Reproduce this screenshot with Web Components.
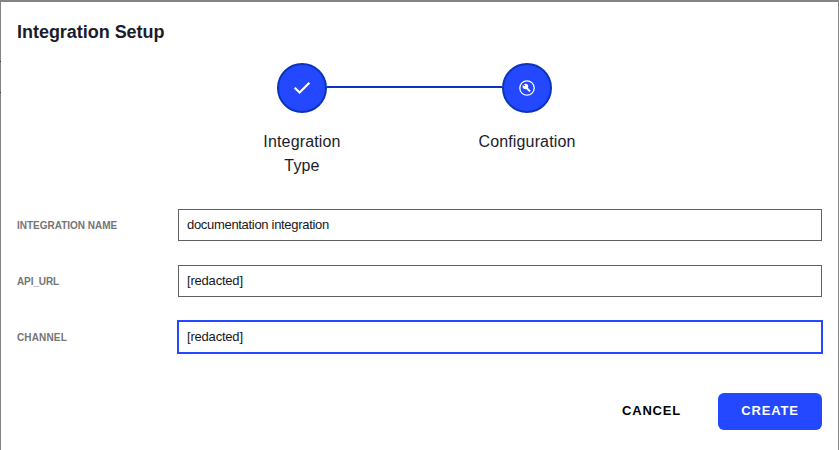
<!DOCTYPE html>
<html lang="en">
<head>
<meta charset="utf-8">
<title>Integration Setup</title>
<style>
html,body{margin:0;height:100%;overflow:hidden;background:#848484}
body{font-family:"Liberation Sans",Arial,sans-serif;color:#1b1c2b}
</style>
</head>
<body>
<setup-dialog heading="Integration Setup">
  <step-track slot="steps">
    <step-item kind="check">Integration<br>Type</step-item>
    <step-item kind="wrench">Configuration</step-item>
  </step-track>
  <form-field label="INTEGRATION NAME" style="--ls:-.01px;--vs:-.31px">documentation integration</form-field>
  <form-field label="API_URL" style="--ls:-.1px;--vs:-.2px">[redacted]</form-field>
  <form-field label="CHANNEL" active style="--ls:.15px;--vs:-.2px">[redacted]</form-field>
  <action-button slot="actions">CANCEL</action-button>
  <action-button slot="actions" primary>CREATE</action-button>
</setup-dialog>
<script>
const define = (name, html) => customElements.define(name, class extends HTMLElement {
  constructor() {
    super();
    this.attachShadow({mode: 'open'}).innerHTML = html(this);
  }
});

define('setup-dialog', el => `
<style>
:host{display:block;box-sizing:border-box;height:100vh;padding:2px 1px 0;background:linear-gradient(#333,#333) 0 61px/1px 1px no-repeat,linear-gradient(#333,#333) 0 92px/1px 1px no-repeat,#848484}
main{box-sizing:border-box;height:100%;background:#fff;padding:18px 16px 0;display:flex;flex-direction:column}
h1{margin:0;font-size:18px;line-height:24px;font-weight:700;letter-spacing:-.03px}
.steps{margin-top:19px}
.fields{margin-top:31px;display:grid;gap:24px}
footer{display:flex;justify-content:flex-end;margin-top:40px}
</style>
<main>
  <h1>${el.getAttribute('heading')}</h1>
  <div class="steps"><slot name="steps"></slot></div>
  <div class="fields"><slot></slot></div>
  <footer><slot name="actions"></slot></footer>
</main>`);

define('step-track', () => `
<style>
:host{display:grid;grid-template-columns:225px 225px;margin-left:172px;height:115px}
</style><slot></slot>`);

const icons = {
  check: '<svg width="46" height="46" viewBox="2 2 46 46"><path d="M17.7 24.7l4.9 4.9L32.4 19.8" fill="none" stroke="#fff" stroke-width="2.1"/></svg>',
  wrench: '<svg width="46" height="46" viewBox="2 2 46 46"><circle cx="25" cy="25" r="7.2" fill="none" stroke="#fff" stroke-width="1.3"/><path d="M23.6 24l4.4 4.4" stroke="#fff" stroke-width="2"/><circle cx="23.4" cy="23.5" r="2.8" fill="#fff"/><path d="M20.8 20.9l2 2" stroke="#2348ff" stroke-width="1.2"/></svg>'
};
define('step-item', el => `
<style>
:host{display:flex;flex-direction:column;align-items:center;font-size:16px;line-height:24px;text-align:center;letter-spacing:.15px}
.row{display:grid;grid-template-columns:1fr 50px 1fr;width:100%;align-items:center}
.dot{box-sizing:border-box;width:50px;height:50px;border:2px solid #0a35bb;border-radius:50%;background:#2348ff;display:grid;place-items:center}
svg{display:block}
i{height:2px;background:#0a35bb;transform:translateY(-1px)}
:host([kind=check]) i:first-child,:host([kind=wrench]) i:last-child{visibility:hidden}
.text{margin-top:17px;padding-left:1px}
</style>
<div class="row"><i></i><div class="dot">${icons[el.getAttribute('kind')]}</div><i></i></div>
<div class="text"><slot></slot></div>`);

define('form-field', el => `
<style>
:host{display:grid;grid-template-columns:161px 1fr;align-items:center;height:32px}
label{font-size:10px;font-weight:700;color:#757575;letter-spacing:var(--ls);white-space:nowrap}
.box{box-sizing:border-box;height:32px;border:1px solid #606060;padding:0 8px;font-size:13px;line-height:30px;letter-spacing:var(--vs);color:#161722}
:host([active]) .box{border-color:#2348ff;box-shadow:0 0 0 1px #2348ff}
</style>
<label>${el.getAttribute('label')}</label><div class="box"><slot></slot></div>`);

define('action-button', () => `
<style>
:host{display:grid;place-items:center;box-sizing:border-box;height:37px;width:133px;border-radius:6px;font-size:13px;line-height:15px;padding-bottom:2px;font-weight:700;letter-spacing:.8px;color:#000}
:host([primary]){width:104px;background:#2348ff;color:#fff}
</style><span><slot></slot></span>`);
</script>
</body>
</html>
